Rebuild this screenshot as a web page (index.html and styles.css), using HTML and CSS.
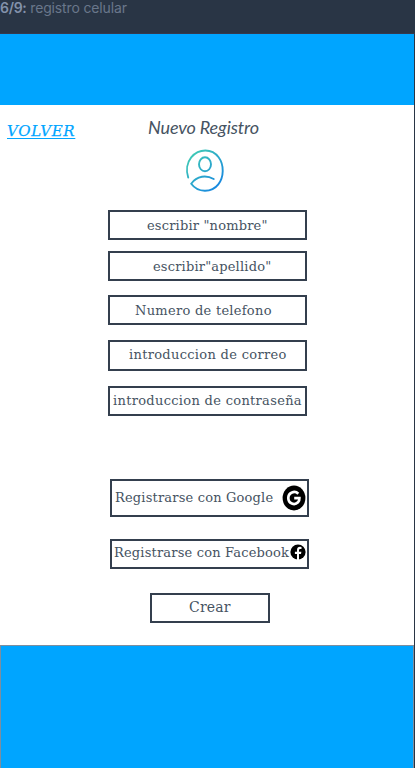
FILE: index.html
```html
<!DOCTYPE html>
<html lang="es">
<head>
<meta charset="utf-8">
<title>registro celular</title>
<link rel="stylesheet" href="styles.css">
</head>
<body>
<header class="bar"><b>6/9:</b> <span class="bar-name">registro celular</span></header>
<div class="phone">
<div class="band top"></div>
<main class="screen">
<div class="heading">
<a class="back">VOLVER</a>
<h1>Nuevo Registro</h1>
</div>
<svg class="avatar" width="40" height="44" viewBox="0 0 40 44" fill="none" stroke="url(#g)" stroke-width="1.9" stroke-linecap="round">
<defs><linearGradient id="g" x1="2" y1="5" x2="36" y2="40" gradientUnits="userSpaceOnUse"><stop offset="0" stop-color="#42ceb2"/><stop offset="1" stop-color="#1482e4"/></linearGradient></defs>
<path d="M3.200 28.500C.9 21.500 2 13.500 6.200 8.300C14-.8 27-.8 33.600 8.300C39.300 16 39 28 33.300 35.400C26.500 44 13 44 6.200 34.800C12 26.500 21.500 26 28.700 30"/>
<ellipse cx="20" cy="15.300" rx="6" ry="7"/>
</svg>
<form class="form">
<div class="box nombre"><span>escribir "nombre"</span></div>
<div class="box apellido"><span>escribir"apellido"</span></div>
<div class="box telefono"><span>Numero de telefono</span></div>
<div class="box correo"><span>introduccion de correo</span></div>
<div class="box clave"><span>introduccion de contraseña</span></div>
<div class="box google"><span>Registrarse con Google</span>
<svg class="google-icon" width="24" height="26" viewBox="0 0 24 26"><ellipse cx="12" cy="13" rx="11.400" ry="12.500"/><path d="M16.300 8.700C12.800 5.200 6.300 7.300 6.300 13C6.300 18.600 12.500 20.700 16 17.300C17.200 16.100 17.500 14.700 17.400 13.100H12.200" fill="none" stroke="#fff" stroke-width="2.700"/></svg></div>
<div class="box facebook"><span>Registrarse con Facebook</span>
<svg class="facebook-icon" width="16" height="16" viewBox="0 0 16 16"><circle cx="8" cy="8" r="7.600"/><path d="M7 16V9.900H4.900V7.700H7V6C7 3.700 8.200 2.800 10 2.800L11.500 2.950V4.900H10.400C9.300 4.900 9 5.500 9 6.300V7.700H11.400L11 9.900H9V16Z" fill="#fff"/></svg></div>
<div class="box crear"><span>Crear</span></div>
</form>
</main>
<div class="band bottom"></div>
</div>
</body>
</html>
```
FILE: styles.css
```css
* { box-sizing: border-box; }
body {
  margin: 0;
  width: 415px;
  height: 768px;
  overflow: hidden;
  background: #293545;
  color: #465362;
  font-family: "DejaVu Serif", serif;
}
.bar {
  height: 34px;
  border-bottom: 1px solid #35394d;
  font: 14px/15px Inter, sans-serif;
  letter-spacing: -0.15px;
  color: #8392ab;
  white-space: nowrap;
}
.bar b { font-weight: 600; letter-spacing: -0.3px; }
.bar-name { color: #69778b; }
.phone { width: 414px; }
.band { background: #00a5ff; }
.top { height: 71px; }
.bottom {
  height: 123px;
  border: solid #7c8e9f;
  border-width: 1px 1px 0;
}
.screen { height: 540px; background: #fff; }
.heading { display: flex; height: 44px; }
.back {
  width: 148px;
  padding: 16px 0 0 7px;
  font-size: 15px;
  line-height: 20px;
  letter-spacing: 0.7px;
  font-style: italic;
  color: #00a5ff;
  -webkit-text-stroke: 0.25px #00a5ff;
  text-decoration: underline;
  text-underline-offset: 2px;
}
h1 {
  margin: 10px 0 0;
  font: italic 18px/24px Lato, sans-serif;
  letter-spacing: -0.13px;
  color: #465362;
  white-space: nowrap;
}
.avatar { display: block; margin-left: 185px; }
.form {
  display: flex;
  flex-direction: column;
  margin: 17px 0 0 108px;
}
.box {
  display: flex;
  flex: none;
  width: 199px;
  height: 30px;
  border: 2px solid #343f4e;
  font-size: 13px;
  line-height: 26px;
  letter-spacing: 0.18px;
  white-space: nowrap;
}
.nombre { padding: 1px 0 0 37px; }
.apellido { margin-top: 11px; padding: 1px 0 0 43px; }
.telefono { margin-top: 14px; padding: 1px 0 0 25px; letter-spacing: 0.28px; }
.correo { height: 31px; margin-top: 15px; padding-left: 19px; letter-spacing: 0.31px; }
.clave { margin-top: 15px; padding-left: 3px; letter-spacing: 0.31px; }
.google {
  height: 38px;
  margin: 63px 0 0 2px;
  padding-left: 3px;
  line-height: 34px;
}
.google span { width: 167px; }
.google-icon { margin-top: 4px; }
.facebook { margin: 22px 0 0 2px; padding-left: 2px; }
.facebook span { width: 176px; line-height: 23px; }
.facebook-icon { margin-top: 3px; }
.crear {
  width: 120px;
  margin: 24px 0 0 42px;
  padding-left: 37px;
  font-size: 14px;
  line-height: 24px;
}
```
